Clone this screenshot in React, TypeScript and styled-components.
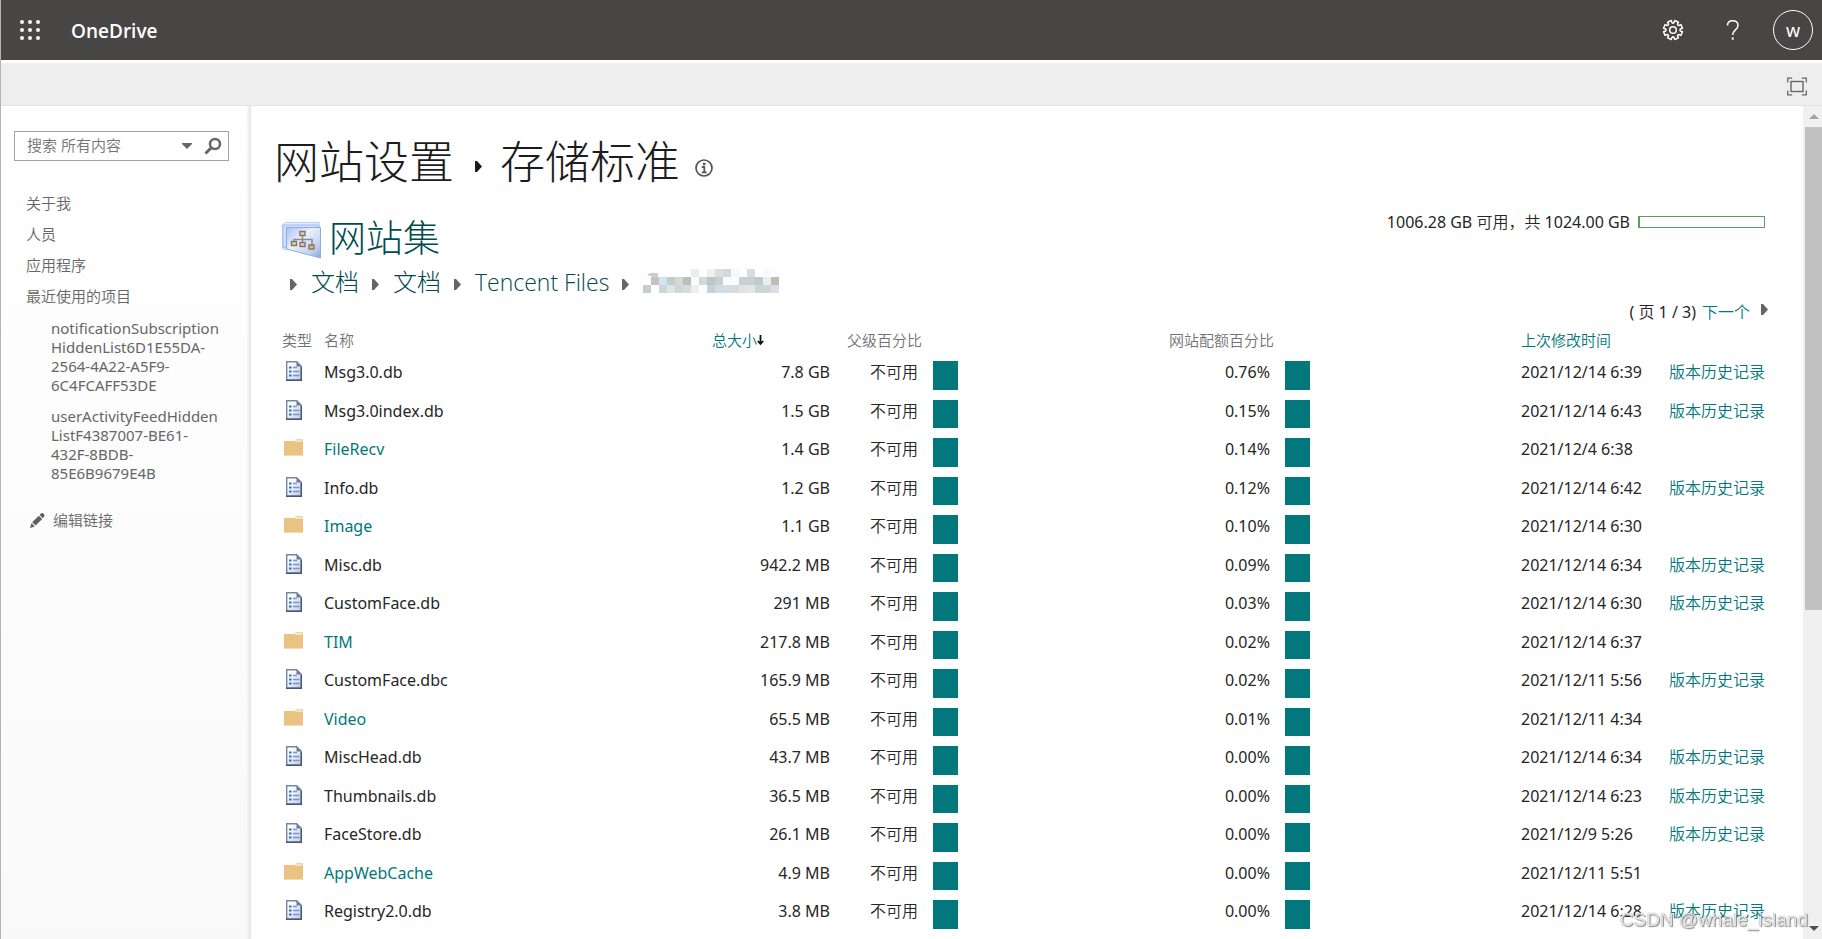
import React from 'react';
import styled, { createGlobalStyle } from 'styled-components';

const Global = createGlobalStyle`
  *, *::before, *::after { box-sizing: border-box; }
  body { margin: 0; background: #fff; color: #262626;
    font-family: "Noto Sans", "Noto Sans CJK SC DemiLight", "Noto Sans CJK SC", sans-serif; font-size: 16px; }
  a { text-decoration: none; }
  button { border: 0; padding: 0; background: none; cursor: pointer; font: inherit; }
  svg { display: block; }
`;

const Page = styled.div`
  display: flex; flex-direction: column; height: 100vh; overflow: hidden;
  border-left: 1px solid #b4b4b4;
`;
const SuiteBar = styled.header`
  display: flex; align-items: center; flex: none; height: 60px;
  padding: 0 9px 0 19px; background: #484644; color: #fff;
`;
const Brand = styled.a`
  margin-left: 31px; padding-top: 2px; color: #fff; font-family: "Open Sans", sans-serif;
  font-size: 19px; font-weight: 600; line-height: 24px;
`;
const SuiteTools = styled.div` display: flex; align-items: center; margin-left: auto; `;
const ToolButton = styled.button`
  display: flex; align-items: center; justify-content: center;
  width: 60px; height: 60px; color: #fff;
`;
const Avatar = styled.button`
  width: 40px; height: 40px; margin-left: 10px; border: 1px solid #fff; border-radius: 50%;
  color: #fff; font-size: 18px; line-height: 24px;
`;
const Ribbon = styled.div`
  display: flex; align-items: center; justify-content: flex-end; flex: none;
  height: 43px; margin-top: 3px; padding: 4px 15px 0 0;
  background: #eee; border-bottom: 1px solid #e4e4e4;
`;
const Body = styled.div` display: flex; flex: 1; min-height: 0; `;

const Sidebar = styled.aside`
  flex: none; width: 250px; padding: 25px 22px 0 13px;
  background: linear-gradient(to right, transparent 245px, #e4e4e4 250px), linear-gradient(#fff, #f9f9f9);
`;
const SearchBox = styled.form`
  display: flex; align-items: center; height: 30px; padding: 0 6px 0 12px;
  border: 1px solid #a3a3a3; background: #fff;
`;
const SearchInput = styled.input`
  flex: 1; min-width: 0; padding: 0 0 2px; border: 0; outline: 0; background: none;
  font: inherit; font-size: 15px;
  &::placeholder { color: #737373; opacity: 1; }
`;
const SearchAction = styled.button` margin-left: 11px; `;
const NavList = styled.ul` margin: 27px 0 0; padding: 0 0 0 12px; list-style: none; `;
const NavItem = styled.li` font-size: 15px; line-height: 31px; `;
const NavLink = styled.a` color: #666; `;
const RecentList = styled.ul` margin: 0; padding: 7px 4px 0 25px; list-style: none; `;
const RecentItem = styled.li`
  margin-bottom: 12px; line-height: 19px; word-break: break-word;
`;
const EditLink = styled.a`
  display: flex; align-items: center; gap: 8px; margin: 27px 0 0 16px;
  color: #666; font-size: 15px; line-height: 20px;
`;

const Main = styled.main`
  flex: 1; min-width: 0; padding: 20px 34px 0 23px; overflow-y: auto; scrollbar-width: none;
`;
const Title = styled.h1`
  display: flex; align-items: center; margin: 0; color: #1c1c1c;
  font-family: "Noto Sans CJK SC Light", "Noto Sans CJK SC", sans-serif;
  font-size: 45px; font-weight: 300; line-height: 68px;
`;
const TitleLink = styled.a` color: #1c1c1c; `;
const TitleArrow = styled.span` margin: 12px 18px 0 21px; `;
const InfoButton = styled.button` margin: 16px 0 0 15px; `;
const Summary = styled.div` display: flex; justify-content: space-between; padding: 16px 4px 0 8px; `;
const SiteTitle = styled.h2`
  display: flex; align-items: center; gap: 7px; margin: 0;
  font-size: 37px; font-weight: 300; line-height: 52px;
  svg { margin-top: 8px; }
`;
const TealTitle = styled.a`
  color: #004b50; font-family: "Noto Sans CJK SC Light", "Noto Sans CJK SC", sans-serif;
`;
const Quota = styled.div` display: flex; align-items: center; gap: 8px; height: 24px; line-height: 24px; `;
const QuotaBar = styled.div` width: 127px; height: 12px; border: 1px solid #5f9d5f; border-left-width: 2px; `;
const Crumbs = styled.nav` display: flex; align-items: center; height: 38px; padding: 2px 0 0 16px; `;
const CrumbArrow = styled.span` margin: 4px 14px 0 0; `;
const Crumb = styled.a<{ $latin?: boolean }>`
  margin-right: 13px; color: #004b50; font-size: ${p => (p.$latin ? 23 : 24)}px;
  font-weight: 300; line-height: 32px;
  font-family: "Open Sans", "Noto Sans CJK SC Light", "Noto Sans CJK SC", sans-serif;
`;
const Pager = styled.div`
  display: flex; justify-content: flex-end; gap: 6px; line-height: 24px; padding-right: 1px;
`;
const PagerNext = styled.a` color: #03787c; `;
const PagerArrow = styled.button` display: flex; margin: 4px 0 0 5px; `;

const FileTable = styled.table`
  width: calc(100% - 9px); margin: 4px 0 0 8px; border-collapse: collapse; table-layout: fixed;
`;
const Col = styled.col<{ $w?: number }>` width: ${p => (p.$w ? p.$w + 'px' : 'auto')}; `;
const Head = styled.th`
  height: 33px; padding: 0 0 2px; color: #737373; text-align: left; vertical-align: top;
  font-size: 15px; font-weight: 400; line-height: 24px; white-space: nowrap;
`;
const SortLink = styled.a`
  display: inline-flex; align-items: center; color: #03787c;
`;
const Row = styled.tr`
  height: 39px;
  &:nth-child(even) { height: 38px; }
`;
const Cell = styled.td<{ $right?: number }>`
  padding: 0 ${p => p.$right ?? 0}px 0 0; vertical-align: top; white-space: nowrap;
  text-align: ${p => (p.$right ? 'right' : 'left')}; line-height: 22px;
`;
const FileName = styled.span` color: #262626; `;
const TealLink = styled.a` color: #03787c; `;
const PercentBar = styled.div`
  width: 25px; height: 29px; background: #03787c;
  ${Row}:nth-child(even) & { height: 28px; }
`;

const ScrollTrack = styled.div`
  display: flex; flex-direction: column; flex: none; width: 19px; padding-left: 2px; background: #f0f0f0;
`;
const ScrollButton = styled.button`
  display: flex; align-items: center; justify-content: center; flex: none; height: 21px;
`;
const ScrollArea = styled.div` flex: 1; `;
const ScrollThumb = styled.div` height: 61%; background: #c1c1c1; `;
const Watermark = styled.div`
  position: fixed; right: 14px; bottom: 6px; color: rgba(255, 255, 255, 0.8);
  font-family: "Liberation Sans", sans-serif; font-size: 19px; line-height: 26px;
  text-shadow: 0 0 1px #777, 1px 1px 1px #888; pointer-events: none;
`;

const AppGrid = () => (
  <svg width="20" height="20" fill="#fff">
    {[2, 10, 18].flatMap(y => [2, 10, 18].map(x => <circle key={x + '-' + y} cx={x} cy={y} r="2" />))}
  </svg>
);
const teeth = Array.from({ length: 8 }, (_, i) => {
  const at = (deg: number, r: number) => {
    const a = ((i * 45 + 22.5 + deg) * Math.PI) / 180;
    return `${(11 + r * Math.cos(a)).toFixed(2)} ${(11 + r * Math.sin(a)).toFixed(2)}`;
  };
  return `${at(-12, 9.6)} L${at(12, 9.6)} L${at(15, 7.4)} Q${at(22.5, 6.4)} ${at(30, 7.4)}`;
}).join(' L');
const Gear = () => (
  <svg width="22" height="22" fill="none" stroke="#fff" strokeWidth="1.5" strokeLinejoin="round">
    <path d={`M${teeth} Z`} />
    <circle cx="11" cy="11" r="3.3" />
  </svg>
);
const Help = () => (
  <svg width="14" height="22" fill="none" stroke="#fff" strokeWidth="1.5">
    <path d="M1.500 6.500C1.500 3.400 3.500 1.700 6.700 1.700s5.300 1.900 5.300 4.800c0 4.400-5.300 4.500-5.300 9.500" />
    <path d="M6.700 18.500v2.200" strokeWidth="2" />
  </svg>
);
const Focus = () => (
  <svg width="20" height="19" fill="none" stroke="#666">
    <path d="M.7 5.500V1.200H5.200M14.800 1.200h4.500V5.500M.7 13.500v4.300H5.200M14.800 17.800h4.500V13.500" strokeWidth="1.300" />
    <rect x="4" y="4.500" width="12" height="10" strokeWidth="1.400" />
  </svg>
);
const Caret = () => (
  <svg width="12" height="8" fill="#666"><path d="M1 1h10v1L6 7 1 2z" /></svg>
);
const Magnifier = () => (
  <svg width="18" height="18" fill="none" stroke="#666">
    <circle cx="11" cy="7" r="5" strokeWidth="2.500" />
    <path d="M7.500 10.500L1.500 16.500" strokeWidth="3" />
  </svg>
);
const Pencil = () => (
  <svg width="15" height="15" fill="#5f5f5f">
    <path d="M0 15l1.500-5L4.800 13.400zM2.200 9.200l6.600-6.500 3.400 3.400-6.600 6.500zM9.600 1.900L11 .6c1-.9 2-.6 2.800.3s1.100 1.800.2 2.800l-1.200 1.500z" />
  </svg>
);
const Arrow = ({ fill = '#666' }: { fill?: string }) => (
  <svg width="7" height="11" fill={fill}><path d="M0 0h2l5 5.500-5 5.500H0z" /></svg>
);
const Info = () => (
  <svg width="18" height="18" fill="none" stroke="#555">
    <circle cx="9" cy="9" r="8" strokeWidth="1.700" />
    <path d="M6.800 8H9.300V13.500M6.800 13.300h4.800" strokeWidth="1.800" />
    <path d="M9.200 3.800v2.400" strokeWidth="2.600" />
  </svg>
);
const SiteIcon = () => (
  <svg width="40" height="37">
    <defs>
      <linearGradient id="pane" x1="0" y1="0" x2="1" y2="1">
        <stop offset="0" stopColor="#a9c0f6" /><stop offset=".4" stopColor="#eaf0fb" />
        <stop offset=".75" stopColor="#c3d2ee" /><stop offset="1" stopColor="#8ca6d8" />
      </linearGradient>
    </defs>
    <path d="M3 .5h34.500V5H5v23l-4.500-1.500V3z" fill="#e4edff" stroke="#bccffa" />
    <path d="M1 3h35v3H5v20l-4-1z" fill="#d3e0fc" stroke="#9db9f4" />
    <path d="M4.500 5.500h34v30.500l-34-9z" fill="url(#pane)" stroke="#93aae0" />
    <path d="M20.500 13v8M12 20.500v-3h18v7" fill="none" stroke="#8b8d92" strokeWidth="1.500" />
    <g fill="#f8cf72" stroke="#77777a" strokeWidth="1.400">
      <rect x="18" y="9.500" width="5" height="4" /><rect x="9.500" y="19.500" width="5" height="4" />
      <rect x="18" y="20.500" width="5" height="4" /><rect x="27" y="23" width="5" height="4" fill="#f9bc34" />
    </g>
  </svg>
);
const DocIcon = () => (
  <svg width="42" height="21">
    <defs>
      <linearGradient id="sheet" x1="0" y1="0" x2="1" y2="1">
        <stop offset=".2" stopColor="#fff" /><stop offset="1" stopColor="#b9caee" />
      </linearGradient>
    </defs>
    <path d="M4.700 .7h10l4.600 4.600v14H4.700z" fill="url(#sheet)" stroke="#7585a5" strokeWidth="1.400" />
    <path d="M4 19.300h16M19.300 6v13" stroke="#475674" strokeWidth="1.400" />
    <path d="M14.500 .7v4.800h4.800z" fill="#6a7a9a" />
    <path d="M7 6.500h2.500M7 10.500h2.500M7 14.500h2.500" stroke="#2f6fc4" strokeWidth="2.200" />
    <path d="M11 6.500h4M11 10.500h6.500M11 14.500h6.500" stroke="#8295bd" strokeWidth="1.300" />
  </svg>
);
const FolderIcon = () => (
  <svg width="42" height="20">
    <path d="M12 4l2-3h7v4h-9z" fill="#f0d4a4" />
    <path d="M14 3h6" stroke="#fdf3df" />
    <path d="M2 3h10l1 1h8v14H2z" fill="#eac282" />
    <path d="M2 17.500h19" stroke="#f2dcb6" />
  </svg>
);
const DownArrow = () => (
  <svg width="7" height="12" fill="none" stroke="#111" strokeWidth="1.800"><path d="M3.500 1v9M.8 7l2.700 3 2.700-3" /></svg>
);
const tiles = [
  ['', '', '', '', '', '', '#e8eff3', '', '#f3efea', '#dadede', '#d0dada', '#f3faff', '', '#d5dfe1', '', '#fcf9f6', '#fdfdfd'],
  ['', '#c8c3be', '#cfe5f3', '#c2cdc8', '#dad8cd', '#b8bfbd', '#fafcfd', '#d3d9d8', '#bac6cc', '#c5d0d5', '#f7fdff', '#f8ffff', '#c8d1d1', '#c8d1d1', '#c0caca', '#e5eff4', '#c1bcb4'],
  ['#c5cdd0', '', '#cdd5d8', '#dde4e8', '#ced6da', '#d5dcde', '#f2eeea', '', '#c6d2d8', '#d3dce1', '#d0deec', '#e0d8d2', '#e2e2e0', '#e5e5e2', '#ccd4da', '#ced6da', '#d8e0e5'],
];
const Mosaic = () => (
  <svg width="136" height="26">
    <path d="M4 6l3-2h8v4h-5z" fill="#c9cfd1" />
    {tiles.map((r, y) => r.map((c, x) => c && <rect key={x + '-' + y} x={x * 8} y={y * 8} width="8" height="8" fill={c} />))}
  </svg>
);

const files: [string, boolean, string, string, string][] = [
  ['Msg3.0.db', false, '7.8 GB', '0.76%', '2021/12/14 6:39'],
  ['Msg3.0index.db', false, '1.5 GB', '0.15%', '2021/12/14 6:43'],
  ['FileRecv', true, '1.4 GB', '0.14%', '2021/12/4 6:38'],
  ['Info.db', false, '1.2 GB', '0.12%', '2021/12/14 6:42'],
  ['Image', true, '1.1 GB', '0.10%', '2021/12/14 6:30'],
  ['Misc.db', false, '942.2 MB', '0.09%', '2021/12/14 6:34'],
  ['CustomFace.db', false, '291 MB', '0.03%', '2021/12/14 6:30'],
  ['TIM', true, '217.8 MB', '0.02%', '2021/12/14 6:37'],
  ['CustomFace.dbc', false, '165.9 MB', '0.02%', '2021/12/11 5:56'],
  ['Video', true, '65.5 MB', '0.01%', '2021/12/11 4:34'],
  ['MiscHead.db', false, '43.7 MB', '0.00%', '2021/12/14 6:34'],
  ['Thumbnails.db', false, '36.5 MB', '0.00%', '2021/12/14 6:23'],
  ['FaceStore.db', false, '26.1 MB', '0.00%', '2021/12/9 5:26'],
  ['AppWebCache', true, '4.9 MB', '0.00%', '2021/12/11 5:51'],
  ['Registry2.0.db', false, '3.8 MB', '0.00%', '2021/12/14 6:28'],
];

export default function App() {
  return (
    <>
      <Global />
      <Page>
        <SuiteBar>
          <button aria-label="应用启动器"><AppGrid /></button>
          <Brand href="#">OneDrive</Brand>
          <SuiteTools>
            <ToolButton aria-label="设置"><Gear /></ToolButton>
            <ToolButton aria-label="帮助"><Help /></ToolButton>
            <Avatar>w</Avatar>
          </SuiteTools>
        </SuiteBar>
        <Ribbon><button aria-label="专注于内容"><Focus /></button></Ribbon>
        <Body>
          <Sidebar>
            <SearchBox>
              <SearchInput aria-label="搜索" placeholder="搜索 所有内容" />
              <SearchAction type="button" aria-label="搜索范围"><Caret /></SearchAction>
              <SearchAction type="button" aria-label="开始搜索"><Magnifier /></SearchAction>
            </SearchBox>
            <NavList>
              <NavItem><NavLink href="#">关于我</NavLink></NavItem>
              <NavItem><NavLink href="#">人员</NavLink></NavItem>
              <NavItem><NavLink href="#">应用程序</NavLink></NavItem>
              <NavItem>
                <NavLink href="#">最近使用的项目</NavLink>
                <RecentList>
                  <RecentItem><NavLink href="#">notificationSubscription<wbr />HiddenList6D1E55DA-2564-4A22-A5F9-6C4FCAFF53DE</NavLink></RecentItem>
                  <RecentItem><NavLink href="#">userActivityFeedHidden<wbr />ListF4387007-BE61-432F-8BDB-85E6B9679E4B</NavLink></RecentItem>
                </RecentList>
              </NavItem>
            </NavList>
            <EditLink href="#"><Pencil />编辑链接</EditLink>
          </Sidebar>
          <Main>
            <Title>
              <TitleLink href="#">网站设置</TitleLink>
              <TitleArrow><Arrow fill="#1c1c1c" /></TitleArrow>
              存储标准
              <InfoButton aria-label="说明"><Info /></InfoButton>
            </Title>
            <Summary>
              <SiteTitle><SiteIcon /><TealTitle href="#">网站集</TealTitle></SiteTitle>
              <Quota>1006.28 GB 可用，共 1024.00 GB<QuotaBar /></Quota>
            </Summary>
            <Crumbs>
              <CrumbArrow><Arrow /></CrumbArrow><Crumb href="#">文档</Crumb>
              <CrumbArrow><Arrow /></CrumbArrow><Crumb href="#">文档</Crumb>
              <CrumbArrow><Arrow /></CrumbArrow><Crumb href="#" $latin>Tencent Files</Crumb>
              <CrumbArrow><Arrow /></CrumbArrow><Mosaic />
            </Crumbs>
            <Pager>
              <span>( 页 1 / 3)</span>
              <PagerNext href="#">下一个</PagerNext>
              <PagerArrow aria-label="下一页"><Arrow /></PagerArrow>
            </Pager>
            <FileTable>
              <colgroup>
                <Col $w={42} /><Col /><Col $w={135} /><Col $w={86} /><Col $w={236} />
                <Col $w={116} /><Col $w={236} /><Col $w={148} /><Col $w={99} />
              </colgroup>
              <thead>
                <tr>
                  <Head>类型</Head>
                  <Head>名称</Head>
                  <Head><SortLink href="#">总大小<DownArrow /></SortLink></Head>
                  <Head colSpan={2}>父级百分比</Head>
                  <Head colSpan={2}>网站配额百分比</Head>
                  <Head colSpan={2}><SortLink href="#">上次修改时间</SortLink></Head>
                </tr>
              </thead>
              <tbody>
                {files.map(([name, folder, size, share, date]) => (
                  <Row key={name}>
                    <Cell>{folder ? <FolderIcon /> : <DocIcon />}</Cell>
                    <Cell>{folder ? <TealLink href="#">{name}</TealLink> : <FileName>{name}</FileName>}</Cell>
                    <Cell $right={17}>{size}</Cell>
                    <Cell $right={15}>不可用</Cell>
                    <Cell><PercentBar /></Cell>
                    <Cell $right={15}>{share}</Cell>
                    <Cell><PercentBar /></Cell>
                    <Cell>{date}</Cell>
                    <Cell>{!folder && <TealLink href="#">版本历史记录</TealLink>}</Cell>
                  </Row>
                ))}
              </tbody>
            </FileTable>
          </Main>
          <ScrollTrack>
            <ScrollButton aria-label="向上滚动"><svg width="10" height="6" fill="#a3a3a3"><path d="M5 0l5 5H0z" /></svg></ScrollButton>
            <ScrollArea><ScrollThumb /></ScrollArea>
            <ScrollButton aria-label="向下滚动"><svg width="10" height="6" fill="#505050"><path d="M0 0h10L5 5z" /></svg></ScrollButton>
          </ScrollTrack>
        </Body>
        <Watermark>CSDN @whale_island</Watermark>
      </Page>
    </>
  );
}
